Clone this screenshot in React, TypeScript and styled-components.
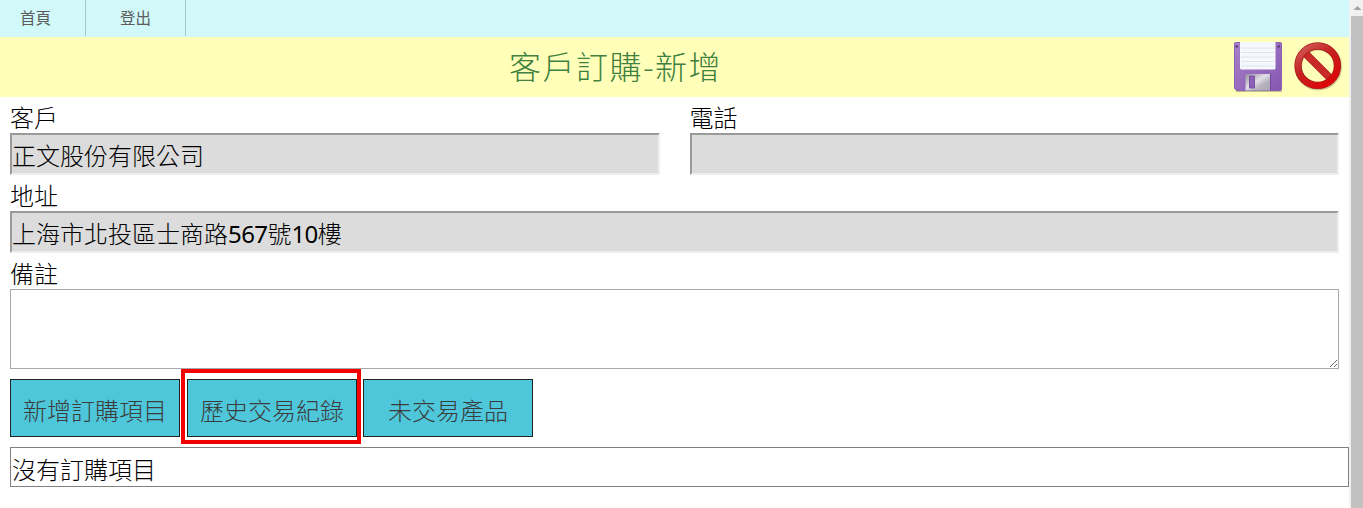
import React from "react";
import styled, { createGlobalStyle } from "styled-components";

const GlobalStyle = createGlobalStyle`
  * { box-sizing: border-box; }
  body {
    margin: 0;
    overflow: hidden;
    background: #fff;
    color: #000;
    font-family: "Noto Sans CJK TC", sans-serif;
    font-weight: 300;
  }
`;

const Window = styled.div`
  display: flex;
  width: 1363px;
  height: 508px;
`;

const Page = styled.div`
  flex: none;
  width: 1349px;
`;

const Nav = styled.nav`
  display: flex;
  height: 37px;
  background: #d1f9f9;
`;

const NavItem = styled.a<{ $width: number; $indent: number }>`
  width: ${(p) => p.$width}px;
  height: 36px;
  padding-left: ${(p) => p.$indent}px;
  border-right: 1px solid #a9c9c9;
  color: #5c5c5c;
  font-size: 15.5px;
  line-height: 35px;
  font-weight: 400;
`;

const TitleBar = styled.header`
  display: flex;
  align-items: center;
  height: 60px;
  padding-right: 6px;
  background: #ffffb9;
`;

const Title = styled.h1`
  flex: 1;
  margin: 0;
  padding-right: 2px;
  color: #408040;
  font-size: 32px;
  line-height: 56px;
  height: 60px;
  font-weight: 300;
  letter-spacing: 1.5px;
  text-align: center;
`;

const Tools = styled.div`
  display: flex;
  gap: 10px;
`;

const IconButton = styled.button`
  width: 50px;
  height: 52px;
  padding: 0;
  border: 0;
  background: none;
  svg { display: block; }
`;

const Form = styled.main`
  padding: 0 0 0 10px;
`;

const FieldRow = styled.div`
  display: flex;
  gap: 30px;
  width: 1329px;
`;

const Field = styled.div`
  flex: 1;
  height: 78px;
`;

const Caption = styled.span`
  display: block;
  height: 36px;
  font-size: 24px;
  line-height: 40px;
`;

const ReadOnlyValue = styled.div`
  height: 42px;
  border: 2px solid;
  border-color: #9a9a9a #eee #eee #9a9a9a;
  background: #dcdcdc;
  font-size: 24px;
  line-height: 40px;
  white-space: nowrap;
`;

const Digits = styled.span`
  font-family: "Noto Sans", sans-serif;
  font-weight: 400;
  line-height: 1;
  letter-spacing: -0.6px;
`;

const Note = styled.textarea`
  display: block;
  width: 1329px;
  height: 80px;
  border: 1px solid #a9a9a9;
  border-radius: 0;
  outline: 0;
  background: #fff;
`;

const NoteField = styled.label`
  display: block;
`;

const Actions = styled.div`
  display: flex;
  gap: 2px;
  height: 78px;
`;

const Action = styled.button`
  width: 170px;
  height: 58px;
  margin-top: 10px;
  padding: 2px 0 0;
  border: 1px solid #222;
  border-radius: 0;
  background: #4ec7db;
  color: #3c3c3c;
  font: 300 24px "Noto Sans CJK TC", sans-serif;
`;

const Highlight = styled.div`
  width: 180px;
  height: 75px;
  margin: 0 0 0 -1px;
  padding: 0 2px 0;
  border: 4px solid #f30000;
  ${Action} { margin-top: 6px; }
`;

const Empty = styled.div`
  width: 1339px;
  height: 40px;
  padding-left: 1px;
  border: 1px solid #808080;
  font-size: 24px;
  line-height: 42px;
`;

const Scrollbar = styled.div`
  width: 14px;
  padding-left: 2px;
  background: #f1f1f1;
  svg { display: block; }
`;

const Thumb = styled.div`
  height: 492px;
  background: #c1c1c1;
`;

const SaveIcon = () => (
  <svg width="50" height="52" viewBox="0 0 50 52">
    <defs>
      <linearGradient id="body" x1="0" y1="0" x2="1" y2="1">
        <stop offset="0" stopColor="#a880ca" />
        <stop offset="1" stopColor="#8658b0" />
      </linearGradient>
      <linearGradient id="metal" x1="0" y1="0" x2="1" y2="1">
        <stop offset="0" stopColor="#96909e" />
        <stop offset=".45" stopColor="#e2dfe6" />
        <stop offset=".65" stopColor="#b9b5c0" />
        <stop offset="1" stopColor="#a9a5b0" />
      </linearGradient>
    </defs>
    <path d="M3 50.500H49" stroke="#4f4a35" strokeOpacity=".35" />
    <path d="M1.500 2.500Q1.500 1.500 2.500 1.500H47.500Q48.500 1.500 48.500 2.500V48.500Q48.500 49.500 47.500 49.500H3.500L1.500 47.500Z" fill="url(#body)" stroke="#8a62b0" />
    <path d="M7 1H42.500V27Q42.500 28.500 41 28.500H8.500Q7 28.500 7 27Z" fill="#f7f8fd" />
    <path d="M8 7H41.500M8 11.500H41.500M8 16H41.500M8 20.500H41.500M8 25H41.500" stroke="#dfe3f0" />
    <path d="M2.500 5.500H5M44.500 5.500H47" stroke="#5a3a78" strokeWidth="2" />
    <path d="M12.500 33H37.500V49.500H12.500Z" fill="url(#metal)" />
    <path d="M37.500 33V49.500" stroke="#74499d" />
    <path d="M16.500 35H21.500V47H16.500Z" fill="#8c60b6" stroke="#7a52a2" />
  </svg>
);

const CancelIcon = () => (
  <svg width="50" height="52" viewBox="0 0 50 52">
    <defs>
      <linearGradient id="ring" x1="0" y1="0" x2=".7" y2="1">
        <stop offset="0" stopColor="#d4605c" />
        <stop offset=".45" stopColor="#c42424" />
        <stop offset="1" stopColor="#dc0808" />
      </linearGradient>
    </defs>
    <circle cx="25.300" cy="25.800" r="20" fill="none" stroke="#6b4a30" strokeOpacity=".3" strokeWidth="7.500" />
    <path d="M12 12L37.500 37.500" stroke="#b01818" strokeWidth="7.500" />
    <path d="M12 12L37.500 37.500" stroke="#c92a2a" strokeWidth="6" />
    <circle cx="24.700" cy="24.700" r="19.700" fill="none" stroke="#a81818" strokeWidth="7.300" />
    <circle cx="24.700" cy="24.700" r="19.700" fill="none" stroke="url(#ring)" strokeWidth="5.900" />
  </svg>
);

const ArrowUp = () => (
  <svg width="12" height="16" viewBox="0 0 12 16">
    <path d="M2.500 10L6.500 6L10.500 10Z" fill="#a3a3a3" />
  </svg>
);

export default function App() {
  return (
    <Window>
      <GlobalStyle />
      <Page>
        <Nav>
          <NavItem $width={86} $indent={20}>首頁</NavItem>
          <NavItem $width={100} $indent={34}>登出</NavItem>
        </Nav>
        <TitleBar>
          <Title>客戶訂購-新增</Title>
          <Tools>
            <IconButton aria-label="儲存"><SaveIcon /></IconButton>
            <IconButton aria-label="取消"><CancelIcon /></IconButton>
          </Tools>
        </TitleBar>
        <Form>
          <FieldRow>
            <Field>
              <Caption>客戶</Caption>
              <ReadOnlyValue>正文股份有限公司</ReadOnlyValue>
            </Field>
            <Field>
              <Caption>電話</Caption>
              <ReadOnlyValue />
            </Field>
          </FieldRow>
          <FieldRow>
            <Field>
              <Caption>地址</Caption>
              <ReadOnlyValue>
                上海市北投區士商路<Digits>567</Digits>號<Digits>10</Digits>樓
              </ReadOnlyValue>
            </Field>
          </FieldRow>
          <NoteField>
            <Caption>備註</Caption>
            <Note />
          </NoteField>
          <Actions>
            <Action>新增訂購項目</Action>
            <Highlight><Action>歷史交易紀錄</Action></Highlight>
            <Action>未交易產品</Action>
          </Actions>
          <Empty>沒有訂購項目</Empty>
        </Form>
      </Page>
      <Scrollbar>
        <ArrowUp />
        <Thumb />
      </Scrollbar>
    </Window>
  );
}
